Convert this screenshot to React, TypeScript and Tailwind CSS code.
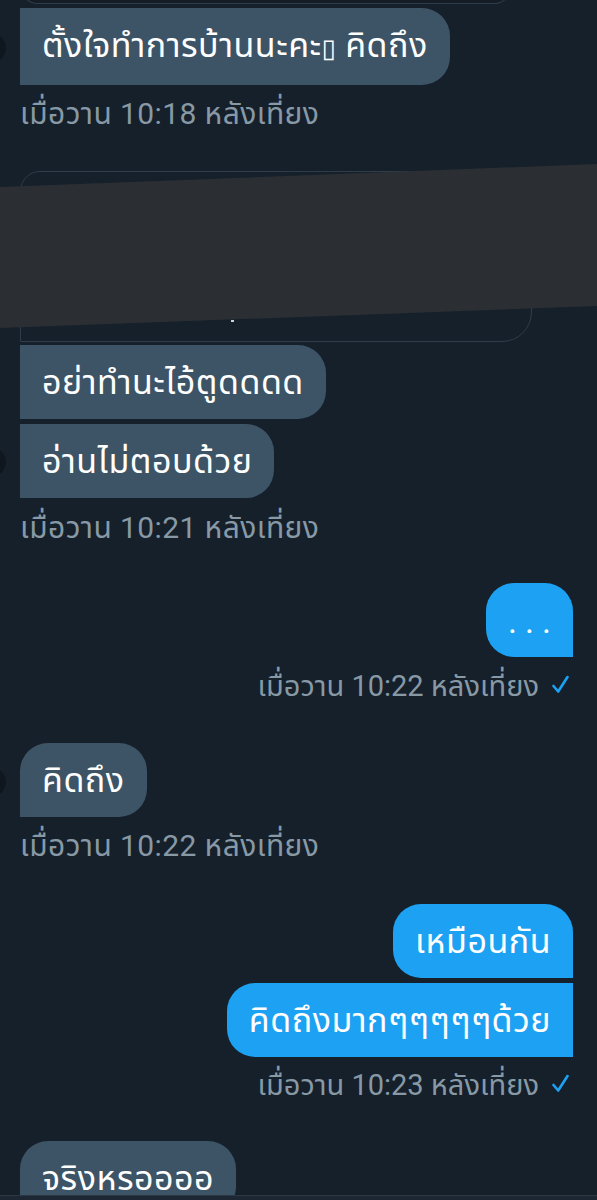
import React from 'react';

const thai = "font-['Roboto','Noto_Sans_Thai','Noto_Sans','DejaVu_Sans',sans-serif]";

type Side = 'in' | 'out';

const Bubble: React.FC<{ side: Side; corners: string; children: React.ReactNode }> = ({ side, corners, children }) => (
  <div
    className={`w-fit px-[22px] py-4 text-[34px] leading-[42px] tracking-[0.5px] text-white ${corners} ${
      side === 'in' ? 'bg-[#3d5466]' : 'ml-auto bg-[#1da1f2]'
    }`}
  >
    {children}
  </div>
);

const Stamp: React.FC<{ time: string; side: Side; className?: string }> = ({ time, side, className }) => (
  <div
    className={`flex items-center leading-9 text-[#8899a6] ${
      side === 'out' ? 'justify-end gap-[13px] pr-[4px] text-[29px]' : 'text-[30px] tracking-[0.4px]'
    } ${className ?? ''}`}
  >
    <span>เมื่อวาน {time} หลังเที่ยง</span>
    {side === 'out' && (
      <svg width="17" height="19" viewBox="0 0 17 19" className="mt-[-4px]">
        <path d="M1.5 11 L6.2 16.5 L15.5 2" fill="none" stroke="#1da1f2" strokeWidth="2.6" strokeLinecap="round" strokeLinejoin="round" />
      </svg>
    )}
  </div>
);

export default function App() {
  return (
    <div className={`relative h-[1200px] w-full overflow-hidden bg-[#15202b] ${thai}`}>
      <div className="flex flex-col px-[20px] pr-[24px]">
        {/* tail of the previous shared card */}
        <div className="mt-[-20px] h-6 w-[492px] rounded-b-[18px] border border-t-0 border-[#2f3d4a] bg-[#141d26]" />

        <div className="mt-1">
          <Bubble side="in" corners="rounded-r-[28px]">
            ตั้งใจทำการบ้านนะคะ<span className="text-[26px] font-['DejaVu_Sans']">▯</span> คิดถึง
          </Bubble>
        </div>
        <Stamp time="10:18" side="in" className="mt-[11px]" />

        {/* shared tweet card, redacted */}
        <div className="mt-[39px] h-[171px] w-[512px] rounded-tl-[20px] rounded-tr-[20px] rounded-br-[30px] border border-[#2f3d4a] bg-[#15202b]">
          <div className="ml-[210px] mt-[148px] h-[2px] w-[3px] bg-white/80" />
        </div>

        <div className="mt-[3px] flex flex-col gap-[5px]">
          <Bubble side="in" corners="rounded-r-[28px]">อย่าทำนะไอ้ตูดดดด</Bubble>
          <Bubble side="in" corners="rounded-r-[28px]">อ่านไม่ตอบด้วย</Bubble>
        </div>
        <Stamp time="10:21" side="in" className="mt-[12px]" />

        <div className="mt-[37px]">
          <Bubble side="out" corners="rounded-tl-[28px] rounded-tr-[28px] rounded-bl-[28px]">
            <span className="relative top-[1px] mr-[-8px] tracking-[8px]">...</span>
          </Bubble>
        </div>
        <Stamp time="10:22" side="out" className="mt-[11px]" />

        <div className="mt-[39px]">
          <Bubble side="in" corners="rounded-tl-[28px] rounded-r-[28px]">คิดถึง</Bubble>
        </div>
        <Stamp time="10:22" side="in" className="mt-[11px]" />

        <div className="mt-[40px] flex flex-col gap-[5px]">
          <Bubble side="out" corners="rounded-tl-[28px] rounded-tr-[28px] rounded-bl-[28px]">เหมือนกัน</Bubble>
          <Bubble side="out" corners="rounded-l-[28px]">คิดถึงมากๆๆๆๆๆด้วย</Bubble>
        </div>
        <Stamp time="10:23" side="out" className="mt-[10px]" />

        <div className="mt-[38px]">
          <Bubble side="in" corners="rounded-tl-[28px] rounded-r-[28px]">จริงหรออออ</Bubble>
        </div>
      </div>

      {/* redaction block laid over the card */}
      <svg className="pointer-events-none absolute left-0 top-0" width="597" height="400" viewBox="0 0 597 400">
        <polygon points="0,187 597,164 597,306 0,328" fill="#2b2f33" />
      </svg>

      {/* avatars cut at the left edge */}
      <div className="absolute left-[-22px] top-[34px] h-7 w-7 rounded-full bg-[#0f161e]" />
      <div className="absolute left-[-22px] top-[448px] h-7 w-7 rounded-full bg-[#0f161e]" />
      <div className="absolute left-[-22px] top-[768px] h-7 w-7 rounded-full bg-[#0f161e]" />

      {/* composer bar */}
      <div className="absolute bottom-0 left-0 h-[5px] w-full border-t border-[#2a3744] bg-[#1c2733]" />
    </div>
  );
}
